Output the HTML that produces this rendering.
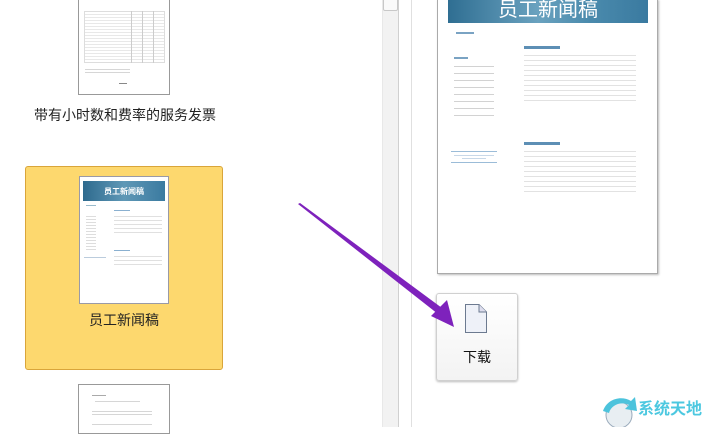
<!DOCTYPE html>
<html><head><meta charset="utf-8"><style>
*{margin:0;padding:0;box-sizing:border-box}
body{width:705px;height:427px;overflow:hidden;background:#fff;position:relative;font-family:"Liberation Sans","Noto Sans CJK SC",sans-serif}
.a{position:absolute}
.t{position:absolute;height:1px;background:#d6d6d6}
</style></head><body>
<div class="a" style="left:78px;top:-2px;width:92px;height:97px;border:1px solid #999;background:#fff">
  <div class="a" style="left:5px;top:12px;width:81px;height:52px;background:repeating-linear-gradient(#fff 0 2px,#e8e8e8 2px 3px);border:1px solid #ddd"></div>
  <div class="a" style="left:52px;top:12px;width:1px;height:52px;background:#ccc"></div>
  <div class="a" style="left:63px;top:12px;width:1px;height:52px;background:#ccc"></div>
  <div class="a" style="left:74px;top:12px;width:1px;height:52px;background:#ccc"></div>
  <div class="t" style="left:6px;top:70px;width:45px"></div>
  <div class="t" style="left:6px;top:73px;width:45px"></div>
  <div class="t" style="left:40px;top:84px;width:8px;background:#888"></div>
</div>
<div class="a" style="left:0;width:250px;top:105px;text-align:center;font-size:14px;color:#222">带有小时数和费率的服务发票</div>

<div class="a" style="left:25px;top:166px;width:198px;height:204px;background:#fdd86e;border:1px solid #d9a53a;border-radius:3px"></div>
<div class="a" style="left:79px;top:176px;width:90px;height:128px;background:#fff;border:1px solid #9a9aa6">
  <div class="a" style="left:3px;top:4px;width:82px;height:20px;background:linear-gradient(90deg,#2e6a8e,#5f98b6 50%,#3a7aa0)"></div>
  <div class="a" style="left:3px;top:9px;width:82px;text-align:center;font-size:8px;color:#fff;font-weight:bold">员工新闻稿</div>
  <div class="t" style="left:6px;top:28px;width:10px;background:#9bc"></div>
  <div class="t" style="left:34px;top:33px;width:16px;background:#8ab0d0"></div>
  <div class="a" style="left:34px;top:37px;width:48px;height:22px;background:repeating-linear-gradient(#fff 0 2px,#e0e0e0 2px 3px,#fff 3px 4px)"></div>
  <div class="t" style="left:34px;top:73px;width:16px;background:#8ab0d0"></div>
  <div class="a" style="left:34px;top:77px;width:48px;height:14px;background:repeating-linear-gradient(#fff 0 2px,#e0e0e0 2px 3px,#fff 3px 4px)"></div>
  <div class="a" style="left:6px;top:37px;width:10px;height:36px;background:repeating-linear-gradient(#fff 0 2px,#ddd 2px 3px)"></div>
  <div class="t" style="left:4px;top:80px;width:22px;background:#bcd"></div>
</div>
<div class="a" style="left:25px;width:198px;top:310px;text-align:center;font-size:14px;color:#222">员工新闻稿</div>

<div class="a" style="left:78px;top:384px;width:92px;height:50px;border:1px solid #999;background:#fff">
  <div class="t" style="left:13px;top:10px;width:14px;background:#aaa"></div>
  <div class="t" style="left:16px;top:16px;width:45px"></div>
  <div class="t" style="left:13px;top:26px;width:60px"></div>
  <div class="t" style="left:13px;top:29px;width:60px"></div>
  <div class="t" style="left:13px;top:39px;width:60px"></div>
</div>

<div class="a" style="left:382px;top:0;width:16px;height:427px;background:#f2f2f2;border-left:1px solid #e8e8e8"></div>
<div class="a" style="left:383px;top:-2px;width:15px;height:13px;background:#fafafa;border:1px solid #c8c8c8;border-radius:2px"></div>
<div class="a" style="left:398px;top:0;width:1px;height:427px;background:#d0d0d0"></div>
<div class="a" style="left:411px;top:0;width:1px;height:427px;background:#e0e0e0"></div>

<div class="a" style="left:437px;top:-1px;width:221px;height:275px;background:#fff;border:1px solid #aaa;box-shadow:1px 1px 2px #bbb">
  <div class="a" style="left:10px;top:0;width:200px;height:23px;background:linear-gradient(90deg,#2f6e92,#6aa2bf 45%,#4b8bad 70%,#3a7aa0)"></div>
  <div class="a" style="left:10px;top:-2px;width:200px;text-align:center;font-size:20px;line-height:24px;color:#fff">员工新闻稿</div>
  <div class="t" style="left:18px;top:32px;width:18px;background:#7aa3c3;height:2px"></div>
  <div class="t" style="left:86px;top:46px;width:36px;background:#5d8fb5;height:3px"></div>
  <div class="t" style="left:16px;top:57px;width:14px;background:#7aa3c3;height:2px"></div>
  <div class="a" style="left:16px;top:65px;width:40px;height:52px;background:repeating-linear-gradient(#fff 0 1px,#d2d2d2 1px 2px,#fff 2px 7px)"></div>
  <div class="a" style="left:86px;top:54px;width:112px;height:50px;background:repeating-linear-gradient(#fff 0 1px,#e2e2e2 1px 2px,#fff 2px 5px)"></div>
  <div class="t" style="left:86px;top:142px;width:36px;background:#5d8fb5;height:3px"></div>
  <div class="a" style="left:86px;top:150px;width:112px;height:42px;background:repeating-linear-gradient(#fff 0 1px,#e2e2e2 1px 2px,#fff 2px 5px)"></div>
  <div class="t" style="left:13px;top:151px;width:46px;background:#9bbcd8"></div>
  <div class="t" style="left:13px;top:162px;width:46px;background:#9bbcd8"></div>
  <div class="t" style="left:16px;top:155px;width:40px;background:#c8d8e8"></div>
  <div class="t" style="left:24px;top:158px;width:24px;background:#c8d8e8"></div>
</div>

<div class="a" style="left:436px;top:293px;width:82px;height:88px;background:linear-gradient(#fff,#f3f3f3);border:1px solid #d0d0d0;border-radius:3px;box-shadow:0 1px 2px #bbb"></div>
<svg class="a" style="left:464px;top:303px" width="24" height="31" viewBox="0 0 24 31">
<path d="M1.5 1.5H15L22.5 9V29.5H1.5Z" fill="#eef1f8" stroke="#6c7a90"/><path d="M15 1.5V9H22.5" fill="#dde" stroke="#6c7a90"/></svg>
<div class="a" style="left:436px;top:347px;width:82px;text-align:center;font-size:14px;color:#111">下载</div>

<svg class="a" style="left:0;top:0" width="705" height="427">
<path d="M298 204 L300 203 L442 308 L438 314 Z" fill="#7e22bc"/>
<path d="M454 327 L431 316 L447 300 Z" fill="#7e22bc"/>
</svg>

<svg class="a" style="left:598px;top:393px" width="44" height="34">
<circle cx="21" cy="22" r="13" fill="#e8eef2" stroke="#9ab" stroke-width="1"/>
<path d="M5 18 C9 6 23 2 33 8 L37 4 L39 18 L27 16 L31 12 C23 8 13 12 11 20 Z" fill="#4cc3dc"/>
</svg>
<div class="a" style="left:638px;top:399px;font-size:16px;line-height:22px;font-weight:bold;color:#4cc8e0;white-space:nowrap">系统天地</div>
</body></html>
